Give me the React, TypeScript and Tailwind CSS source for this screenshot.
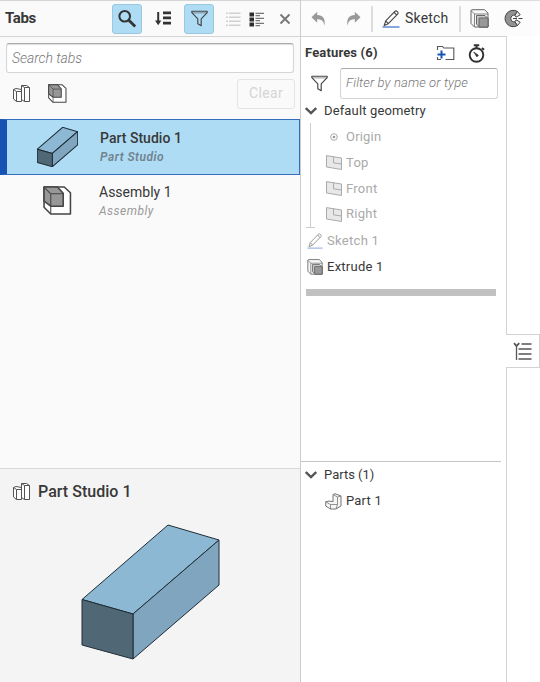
import React from "react";

type IconProps = { className?: string };

const SearchIcon = () => (
  <svg className="size-[20px]" viewBox="0 0 20 20" fill="none" stroke="#333">
    <circle cx="7.7" cy="7.2" r="5.3" strokeWidth="2" />
    <path d="M11.6 11l6.6 6.4" strokeWidth="2.8" />
  </svg>
);

const SortIcon = () => (
  <svg className="h-[15px] w-[17px]" viewBox="0 0 17 15" fill="#333">
    <path d="M2.2 1h2v8.500h2.100L3.200 14.200 0 9.500h2.200zM8 .6h8v2.600H8zM8 5.600h8v2.600H8zM8 10.800h8v2.600H8z" />
  </svg>
);

const FunnelIcon = ({ className = "" }: IconProps) => (
  <svg className={className} viewBox="0 0 16 16" fill="none" stroke="#444" strokeWidth="1.1" strokeLinejoin="round">
    <path d="M.8 1.200h14.400v1.300L9.600 8.300v6.500l-3.200-1.900V8.300L.8 2.500z" />
    <path d="M1.200 2.700h13.500" strokeWidth=".5" />
  </svg>
);

const ListIcon = () => (
  <svg className="h-[15px] w-[16px]" viewBox="0 0 16 15" stroke="#d0d0d0" strokeWidth="1.400">
    <path d="M1 1.300h2M4 1.300h11.500M1 5.300h2M4 5.300h11.500M1 9.300h2M4 9.300h11.500M1 13.300h2M4 13.300h11.500" />
  </svg>
);

const DetailIcon = () => (
  <svg className="h-[15px] w-[16px]" viewBox="0 0 16 15">
    <path d="M.5.500H5v4H.500zM.5 5.500H5v4H.500zM.5 10.500H5v4H.500z" fill="#2d2d2d" />
    <path d="M6.500 1.400H15M6.500 3.700H11M6.500 6.400H15M6.500 8.700H11M6.500 11.400H15M6.500 13.700H11" stroke="#777" strokeWidth="1.300" />
  </svg>
);

const CloseIcon = () => (
  <svg className="size-[12px]" viewBox="0 0 12 12" stroke="#777" strokeWidth="1.900">
    <path d="M1.500 1.500l9 9M10.500 1.500l-9 9" />
  </svg>
);

const StudioIcon = () => (
  <svg className="size-[19px]" viewBox="0 0 19 19" fill="#fff" stroke="#555" strokeWidth="1" strokeLinejoin="round">
    <path d="M1.500 5.500l2.500-1 5.500 1v12H4.500l-3-2.500z" />
    <path d="M1.500 5.500l3 2v10M4.500 7.500h5" fill="none" />
    <path d="M9.500 1.500h5l3 2v14h-5l-3-2z" />
    <path d="M9.500 1.500l3 2v14M12.500 3.500h5" fill="none" />
  </svg>
);

const AssemblyIcon = ({ className = "" }: IconProps) => (
  <svg className={className} viewBox="0 0 28 28" stroke="#444" strokeWidth="1.500" strokeLinejoin="round">
    <path d="M1 1h19.500l6 5.500V27H7.500L1 20.500z" fill="#fff" />
    <path d="M1 1h13l5.500 6v12.500H7.500L1 14.500z" fill="#979797" />
    <path d="M1 1l6.500 6.500V27M7.500 7.500h12" fill="none" strokeWidth="1" />
  </svg>
);

const BoxDrawing = ({ className = "" }: IconProps) => (
  <svg className={className} viewBox="0 0 139 136" stroke="#1f2d36" strokeWidth="1" strokeLinejoin="round">
    <path d="M1 75.500L87 1l51 15-86 74z" fill="#8cb8d3" vectorEffect="non-scaling-stroke" />
    <path d="M138 16v45l-86 74V90z" fill="#80a5bf" vectorEffect="non-scaling-stroke" />
    <path d="M1 75.500L52 90v45L1 121z" fill="#506875" vectorEffect="non-scaling-stroke" />
  </svg>
);

const ArrowIcon = ({ className = "" }: IconProps) => (
  <svg className={className} viewBox="0 0 15 16" fill="#999">
    <path d="M6.200.700v3.200c5.500 0 8.600 3.500 7.200 10.900-.6-4.600-3-6.600-7.200-6.500v3.500L.5 6.200z" />
  </svg>
);

const PencilIcon = ({ className = "" }: IconProps) => (
  <svg className={className} viewBox="0 0 18 18" fill="none" stroke="#444" strokeWidth="1.100" strokeLinejoin="round">
    <path d="M2.200 15.500l1.500-4.700L12.900 1.300q1-.9 2.100.1l.7.700q.8 1-.1 2L6.300 13.700zM3.700 10.800l2.600 2.900M12 2.200l2.700 2.900" />
    <path d="M.5 17H17.500" stroke="#4778ce" strokeWidth="1.300" />
  </svg>
);

const ExtrudeIcon = ({ className = "" }: IconProps) => (
  <svg className={className} viewBox="0 0 19 19" stroke="#666" strokeWidth="1" strokeLinejoin="round">
    <path d="M1 1.500L2 .7h12.500L18 4v14H4.500L1 14.500z" fill="#f7f7f7" />
    <path d="M1 1.500L4.500 5v13M4.500 5H18" fill="none" strokeWidth=".8" />
    <path d="M6.500 6.500H15l3 3V18H9.500l-3-3z" fill="#c8c8c8" />
    <path d="M9 9h9v9H9z" fill="#999" />
  </svg>
);

const RevolveIcon = () => (
  <svg className="size-[19px]" viewBox="0 0 19 19" stroke="#444" strokeWidth="1" strokeLinejoin="round">
    <path d="M13.500 2.500A8.200 8.200 0 1 0 13.500 16.500L11 12.800a3.400 3.400 0 1 1 0-6.600z" fill="#929292" />
    <path d="M13.500 2.500l2.700 3.300-4.200 2.400-1-2zM13.500 16.500l2.700-3.300-4.200-2.400-1 2z" fill="#eee" />
    <path d="M9 9.500h9.500" strokeDasharray="4 1.500" fill="none" />
  </svg>
);

const FolderPlusIcon = () => (
  <svg className="h-[16px] w-[19px]" viewBox="0 0 19 16" fill="none">
    <path d="M1.500 5V1.500h5l1.300 1.500h10v11.500H9.500M1.500 12v2.500H5" stroke="#555" strokeWidth="1.100" />
    <path d="M5.500 5.500v8M1.500 9.500h8" stroke="#1954b5" strokeWidth="2" />
  </svg>
);

const StopwatchIcon = () => (
  <svg className="h-[19px] w-[18px]" viewBox="0 0 18 19" fill="none" stroke="#303030">
    <circle cx="8.500" cy="11" r="6.800" strokeWidth="1.900" />
    <path d="M8.500 1v3.300M5.800 1.200h5.400" strokeWidth="1.900" />
    <path d="M14 4l2 1.800" strokeWidth="2" />
    <path d="M5.700 8l4.700 3.200-1.500 1.700z" fill="#303030" strokeWidth=".6" />
  </svg>
);

const ChevronIcon = () => (
  <svg className="h-[8px] w-[12px]" viewBox="0 0 12 8" fill="none" stroke="#555" strokeWidth="2.400">
    <path d="M.8 1L6 6l5.200-5" />
  </svg>
);

const PlaneIcon = () => (
  <svg className="h-[15px] w-[16px]" viewBox="0 0 16 15" fill="#e8e8e8" stroke="#aaa" strokeWidth="1">
    <path d="M.500.600L15.500 3v11.500L.500 12z" />
    <path d="M7.500 1.800v6l8 1.200" fill="none" />
  </svg>
);

const OriginIcon = () => (
  <svg className="size-[8px]" viewBox="0 0 8 8" fill="none" stroke="#aaa">
    <circle cx="4" cy="4" r="3.300" />
    <circle cx="4" cy="4" r="1.300" fill="#999" stroke="none" />
  </svg>
);

const PartIcon = () => (
  <svg className="size-[17px]" viewBox="0 0 17 17" fill="#f5f5f5" stroke="#777" strokeWidth="1" strokeLinejoin="round">
    <path d="M8 1.500L10 .7l6 2.300v10L11 16H5.500L.700 13V8.800L4 8l4 .7z" />
    <path d="M8 1.500L12.500 4v7.500H5.500L.700 8.800M5.500 11.500V16M12.500 4L16 3M12.500 11.500L11 16" fill="none" strokeWidth=".8" />
  </svg>
);

const TreeIcon = () => (
  <svg className="h-[19px] w-[19px]" viewBox="0 0 19 19" fill="none" stroke="#555" strokeWidth="1.300">
    <path d="M1 1.200L3.500 4 6.300 1.200" strokeWidth="1.800" />
    <path d="M3.500 4v14M8.500 2H18.500M5.500 7h13M5.500 12h13M5.500 17h13" />
  </svg>
);

const Divider = () => <span className="h-[26px] w-[2px] bg-[#dcdcdc]" />;

const planes = ["Top", "Front", "Right"];

function TabsPanel() {
  return (
    <aside className="flex h-full w-[301px] shrink-0 flex-col border-r border-[#ccc] bg-[#fafafa]">
      <header className="flex h-[37px] shrink-0 items-center border-y border-[#d4d4d4] pl-[5px]">
        <h1 className="w-[107px] text-[15px] font-bold tracking-[-0.35px]">Tabs</h1>
        <button className="flex h-[30px] w-[30px] items-center justify-center rounded-[3px] border border-[#9bc8df] bg-[#afdcf5]"><SearchIcon /></button>
        <span className="ml-[13px]"><SortIcon /></span>
        <button className="ml-[12px] flex h-[30px] w-[30px] items-center justify-center rounded-[3px] border border-[#9bc8df] bg-[#afdcf5]"><FunnelIcon className="size-[17px]" /></button>
        <span className="ml-[11px] mt-[2px]"><ListIcon /></span>
        <span className="ml-[8px] mt-[2px]"><DetailIcon /></span>
        <span className="ml-[14px]"><CloseIcon /></span>
      </header>
      <div className="mx-[6px] mt-[6px] flex h-[30px] shrink-0 items-center rounded-[3px] border border-[#d5d5d5] border-t-[#aaa] bg-white pl-[5px] text-[14px] font-light italic text-[#777] shadow-[inset_0_1px_1px_#ddd]"><span className="tracking-[-0.05px]">Search tabs</span></div>
      <div className="mt-[6px] flex h-[40px] shrink-0 items-start pl-[12px] pr-[5px]">
        <span className="mt-[5px]"><StudioIcon /></span>
        <span className="ml-[17px] mt-[5px]"><AssemblyIcon className="size-[19px]" /></span>
        <button className="ml-auto h-[30px] w-[58px] rounded-[3px] border border-[#e4e4e4] pb-px text-[14px] tracking-[0.35px] text-[#d5d5d5]">Clear</button>
      </div>
      <div className="flex h-[56px] shrink-0 border border-l-[7px] border-[#356ebc] border-l-[#1751b2] bg-[#afdcf5]">
        <BoxDrawing className="ml-[30px] mt-[7px] h-[40px] w-[41px]" />
        <div className="ml-[22px] pt-[9px]">
          <p className="text-[14px] font-medium leading-[19px] tracking-[0.02px]">Part Studio 1</p>
          <p className="text-[12px] font-semibold italic leading-[19px] tracking-[0.5px] text-[#71838d]">Part Studio</p>
        </div>
      </div>
      <div className="flex h-[56px] shrink-0 pl-[43px]">
        <AssemblyIcon className="mt-[11px] size-[29px]" />
        <div className="ml-[27px] pt-[8px]">
          <p className="text-[14px] leading-[19px]">Assembly 1</p>
          <p className="text-[12px] italic leading-[19px] tracking-[0.5px] text-[#999]">Assembly</p>
        </div>
      </div>
      <section className="mt-auto h-[214px] shrink-0 border-t border-[#d8d8d8] bg-[#f4f4f4]">
        <div className="flex h-[45px] items-center pl-[12px]">
          <StudioIcon />
          <h2 className="ml-[7px] text-[16px] font-medium tracking-[0.02px]">Part Studio 1</h2>
        </div>
        <BoxDrawing className="ml-[81px] mt-[10px] h-[136px] w-[139px]" />
      </section>
    </aside>
  );
}

function FeaturesPanel() {
  return (
    <main className="flex h-[646px] w-[206px] flex-col border-r border-t border-[#d2d2d2] bg-white">
      <header className="flex h-[32px] shrink-0 items-center pl-[4px]">
        <h2 className="w-[131px] text-[13px] font-bold tracking-[0.15px]">Features (6)</h2>
        <FolderPlusIcon />
        <span className="ml-[13px]"><StopwatchIcon /></span>
      </header>
      <div className="-mt-px flex h-[30px] shrink-0 items-center pl-[10px]">
        <FunnelIcon className="size-[17px]" />
        <div className="ml-[12px] flex h-[31px] w-[158px] items-center rounded-[3px] border border-[#d5d5d5] border-t-[#aaa] pl-[5px] text-[13px] font-light italic text-[#777]"><span className="tracking-[0.12px]">Filter by name or type</span></div>
      </div>
      <div className="flex h-[25px] shrink-0 items-center pl-[4px]"><ChevronIcon /><span className="ml-[7px] text-[13px] tracking-[0.14px]">Default geometry</span></div>
      <div className="ml-[9px] flex h-[104px] shrink-0 flex-col border-l border-[#ccc] pt-[1px] text-[13px] text-[#aaa]">
        <div className="flex h-[26px] items-center pl-[19px]"><OriginIcon /><span className="ml-[8px] tracking-[0.2px]">Origin</span></div>
        {planes.map((name) => <div key={name} className="flex h-[26px] items-center pl-[15px]"><PlaneIcon /><span className="ml-[4px] tracking-[0.25px]">{name}</span></div>)}
      </div>
      <span className="ml-[5px] h-px w-[9px] shrink-0 bg-[#ccc]" />
      <div className="flex h-[26px] shrink-0 items-center pl-[6px] text-[13px] text-[#aaa]"><PencilIcon className="size-[16px] opacity-55" /><span className="ml-[4px] tracking-[0.3px]">Sketch 1</span></div>
      <div className="flex h-[26px] shrink-0 items-center pl-[6px] text-[13px]"><ExtrudeIcon className="size-[16px]" /><span className="ml-[4px] tracking-[0.25px]">Extrude 1</span></div>
      <div className="ml-[5px] mt-[9px] h-[7px] w-[190px] shrink-0 bg-[#c1c1c1]" />
      <section className="mt-auto h-[221px] w-[200px] shrink-0 border-t border-[#c4c4c4]">
        <div className="flex h-[26px] items-center pl-[4px]"><ChevronIcon /><span className="ml-[7px] text-[13px]">Parts (1)</span></div>
        <div className="flex h-[26px] items-center pl-[24px]"><PartIcon /><span className="ml-[4px] text-[13px] tracking-[0.2px]">Part 1</span></div>
      </section>
    </main>
  );
}

export default function App() {
  return (
    <div className="flex h-[682px] w-[540px] overflow-hidden bg-white font-['Roboto',sans-serif] text-[#383838]">
      <TabsPanel />
      <div className="flex w-[239px] flex-col">
        <nav className="flex h-[36px] shrink-0 items-center border-t border-[#ddd] bg-[#fcfcfc] pl-[10px]">
          <ArrowIcon className="h-[16px] w-[15px]" />
          <ArrowIcon className="ml-[20px] h-[16px] w-[15px] -scale-x-100" />
          <span className="ml-[10px] flex"><Divider /></span>
          <PencilIcon className="ml-[9px] size-[18px]" />
          <span className="ml-[5px] w-[54px] text-[14px] tracking-[0.2px]">Sketch</span>
          <Divider />
          <ExtrudeIcon className="ml-[9px] size-[19px]" />
          <span className="ml-[15px]"><RevolveIcon /></span>
        </nav>
        <div className="flex">
          <FeaturesPanel />
          <button className="-ml-px mt-[298px] flex h-[34px] w-[34px] items-center justify-center border border-l-0 border-[#d2d2d2] bg-white"><TreeIcon /></button>
        </div>
      </div>
    </div>
  );
}
